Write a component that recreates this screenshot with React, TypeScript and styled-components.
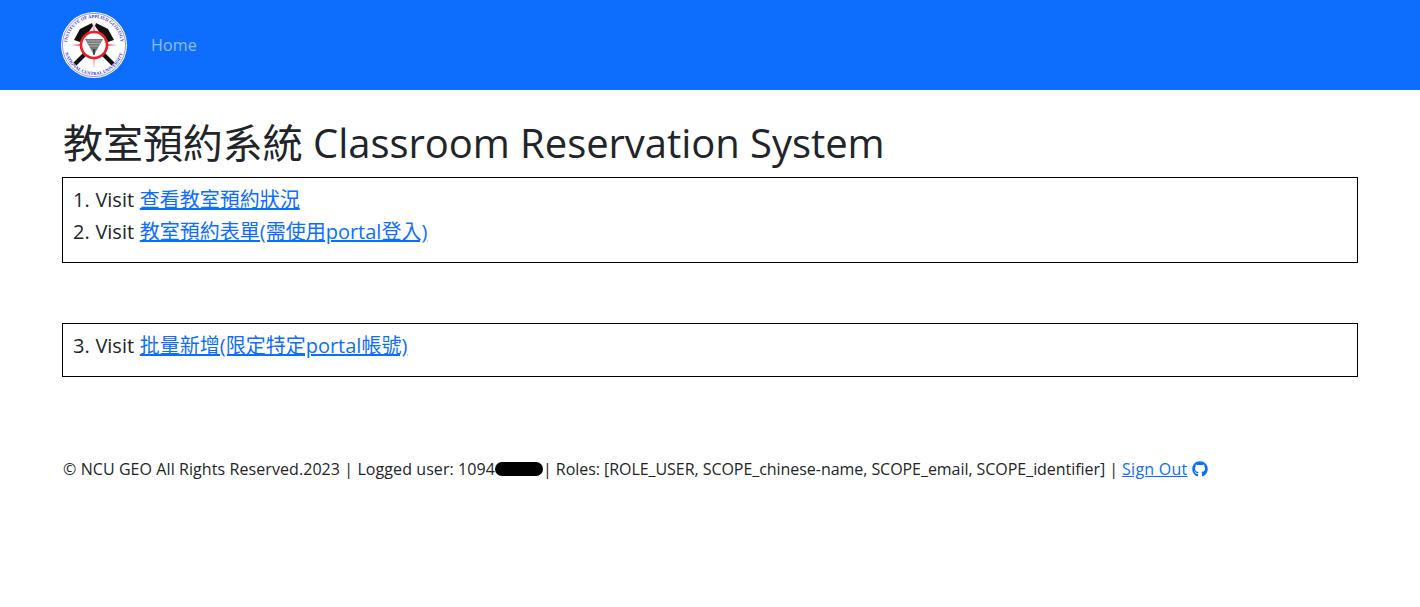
import React from "react";
import styled, { createGlobalStyle } from "styled-components";
import { FaGithub } from "react-icons/fa";

const Global = createGlobalStyle`
  html, body { margin: 0; padding: 0; background: #fff; }
  body {
    font-family: "Open Sans", "Noto Sans CJK TC", sans-serif;
    font-size: 16px;
    color: #212529;
  }
`;

const Navbar = styled.nav`
  height: 90px;
  background: #0d6efd;
  display: flex;
  align-items: center;
  padding-left: 61px;
  gap: 24px;
`;

const Logo = styled.svg`
  width: 66px;
  height: 66px;
  display: block;
`;

const NavLink = styled.a`
  font-size: 16px;
  letter-spacing: 0.2px;
  color: rgba(255, 255, 255, 0.55);
  text-decoration: none;
`;

const Main = styled.main`
  padding: 0 62px;
`;

const Title = styled.h1`
  margin: 29px 0 10px 1px;
  font-size: 40px;
  line-height: 48px;
  font-weight: 400;
  letter-spacing: -0.05px;
  white-space: nowrap;
`;

const Box = styled.section<{ $bottom: number }>`
  border: 1px solid #000;
  padding: 6px 10px 14px;
  margin-bottom: ${(p) => p.$bottom}px;
  font-size: 20px;
  line-height: 32px;
`;

const Row = styled.div`
  height: 32px;
  white-space: nowrap;
  word-spacing: 0.5px;
`;

const Link = styled.a`
  color: #0d6efd;
  text-decoration: underline;
`;

const Footer = styled.footer`
  margin-left: 1px;
  display: flex;
  align-items: center;
  font-size: 16px;
  line-height: 24px;
  white-space: nowrap;
`;

const Redact = styled.span`
  display: inline-block;
  width: 48px;
  height: 14px;
  border-radius: 7px;
  background: #000;
`;

const Spaced = styled.span<{ $tracking: number }>`
  white-space: pre;
  letter-spacing: ${(p) => p.$tracking}px;
`;

const SignOut = styled(Link)`
  letter-spacing: 0.25px;
`;

const GitHub = styled(FaGithub)`
  width: 16px;
  height: 16px;
  color: #0d6efd;
  margin-left: 4px;
`;

const SchoolLogo = () => (
  <Logo viewBox="0 0 66 66">
    <defs>
      <path id="ringTop" d="M6 33 A27 27 0 0 1 60 33" />
      <path id="ringBottom" d="M3 33 A30 30 0 0 0 63 33" />
    </defs>
    <circle cx="33" cy="33" r="33" fill="#fff" />
    <circle cx="33" cy="33" r="31.6" fill="none" stroke="#4d4de0" strokeWidth="0.6" />
    <text fontFamily="Liberation Serif, serif" fontSize="4.6" fill="#3a3ad8" fontWeight="700" textAnchor="middle">
      <textPath href="#ringTop" startOffset="50%">INSTITUTE OF APPLIED GEOLOGY</textPath>
    </text>
    <text fontFamily="Liberation Serif, serif" fontSize="4.6" fill="#3a3ad8" fontWeight="700" textAnchor="middle">
      <textPath href="#ringBottom" startOffset="50%">NATIONAL CENTRAL UNIVERSITY</textPath>
    </text>
    <path d="M33 9 L34.2 31 L56 33 L34.2 35 L33 57 L31.8 35 L10 33 L31.8 31 Z" fill="#e8505a" />
    <g stroke="#111" strokeLinecap="butt">
      <path d="M52 52 L24 24" strokeWidth="4" />
      <path d="M14 52 L42 24" strokeWidth="4" />
    </g>
    <path d="M13 28 L19 17 L31 11 L32 14 L27 21 L19 30 Z" fill="#111" />
    <path d="M53 28 L47 17 L35 11 L34 14 L39 21 L47 30 Z" fill="#111" />
    <circle cx="33" cy="33" r="13" fill="#fff" stroke="#ee1c25" strokeWidth="2.6" />
    <path d="M24 27 H42 L33 43 Z" fill="#777" />
    <path d="M26 29 H40 M27 31.5 H39 M28.5 34 H37.5" stroke="#bbb" strokeWidth="0.8" />
    <path d="M33 43 L33 37" stroke="#222" strokeWidth="1.2" />
  </Logo>
);

export default function App() {
  return (
    <>
      <Global />
      <Navbar>
        <SchoolLogo />
        <NavLink href="#">Home</NavLink>
      </Navbar>
      <Main>
        <Title>教室預約系統 Classroom Reservation System</Title>
        <Box $bottom={60}>
          <Row>1. Visit <Link href="#">查看教室預約狀況</Link></Row>
          <Row>2. Visit <Link href="#">教室預約表單(需使用portal登入)</Link></Row>
        </Box>
        <Box $bottom={80}>
          <Row>3. Visit <Link href="#">批量新增(限定特定portal帳號)</Link></Row>
        </Box>
        <Footer>
          <Spaced $tracking={0.08}>© NCU GEO All Rights Reserved.2023 | Logged user: 1094</Spaced>
          <Redact />
          <Spaced $tracking={-0.05}>| Roles: [ROLE_USER, SCOPE_chinese-name, SCOPE_email, SCOPE_identifier] | </Spaced>
          <SignOut href="#">Sign Out</SignOut>
          <GitHub />
        </Footer>
      </Main>
    </>
  );
}
